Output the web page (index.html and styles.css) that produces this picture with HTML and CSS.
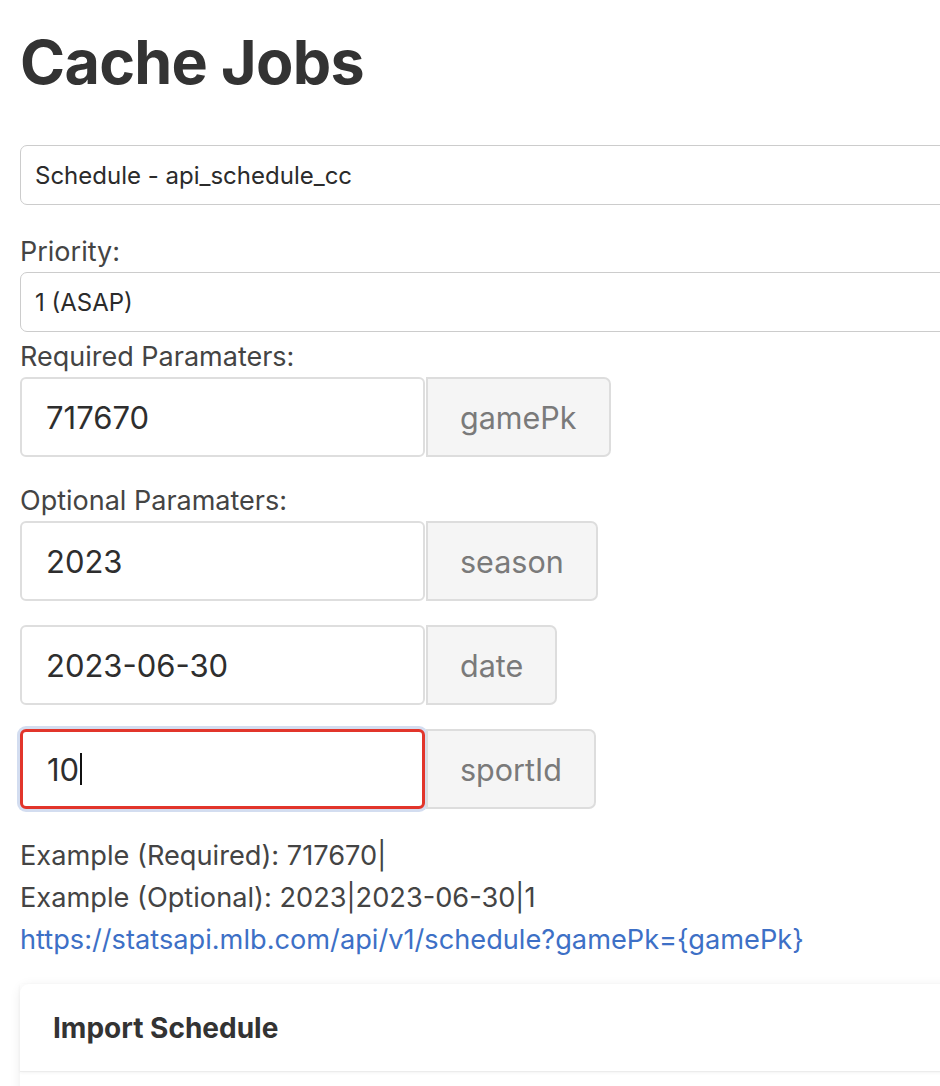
FILE: index.html
```html
<!DOCTYPE html>
<html lang="en">
<head>
<meta charset="utf-8">
<title>Cache Jobs</title>
<link rel="stylesheet" href="styles.css">
</head>
<body>
<main class="page">
  <h1 class="title">Cache Jobs</h1>

  <div class="select select-first">Schedule - api_schedule_cc</div>

  <div class="label">Priority:</div>
  <div class="select">1 (ASAP)</div>

  <div class="label label-tight">Required Paramaters:</div>
  <div class="input-group">
    <div class="control">717670</div>
    <div class="addon">gamePk</div>
  </div>

  <div class="label">Optional Paramaters:</div>
  <div class="input-group">
    <div class="control">2023</div>
    <div class="addon">season</div>
  </div>
  <div class="input-group">
    <div class="control">2023-06-30</div>
    <div class="addon">date</div>
  </div>
  <div class="input-group">
    <div class="control control-invalid">10<span class="caret"></span></div>
    <div class="addon">sportId</div>
  </div>

  <div class="examples">
    <div class="example">Example (Required): 717670|</div>
    <div class="example">Example (Optional): 2023|2023-06-30|1</div>
    <a class="example link" href="#">https://statsapi.mlb.com/api/v1/schedule?gamePk={gamePk}</a>
  </div>

  <section class="card">
    <div class="card-header">Import Schedule</div>
    <div class="card-body"></div>
  </section>
</main>
</body>
</html>
```

FILE: styles.css
```css
html, body {
  margin: 0;
  padding: 0;
  background: #ffffff;
  overflow: hidden;
}

.page {
  width: 980px;
  padding-left: 20px;
  font-family: Inter, "Liberation Sans", sans-serif;
  color: #3a3a3a;
}

.title {
  margin: 0;
  padding-top: 22px;
  font-size: 61px;
  line-height: 80px;
  font-weight: 700;
  letter-spacing: -0.7px;
  color: #333333;
}

.select {
  box-sizing: border-box;
  height: 60px;
  border: 1.5px solid #cccccc;
  border-radius: 7px;
  padding-left: 14px;
  display: flex;
  align-items: center;
  font-size: 24px;
  color: #2b2b2b;
}

.select-first {
  margin-top: 43px;
}

.label {
  margin-top: 27px;
  height: 40px;
  line-height: 40px;
  font-size: 27px;
  color: #444444;
}

.label-tight {
  margin-top: 5px;
}

.select + .label-tight { margin-top: 5px; }

.input-group + .label { margin-top: 24px; }

.input-group {
  display: flex;
  height: 80px;
  margin-bottom: 24px;
}

.control {
  box-sizing: border-box;
  width: 405px;
  height: 100%;
  border: 2.5px solid #dedede;
  border-radius: 6px;
  padding-left: 24px;
  display: flex;
  align-items: center;
  font-size: 31px;
  color: #2e2e2e;
  background: #ffffff;
}

.control-invalid {
  border: 3px solid #e2352b;
  box-shadow: 0 0 0 3px #d3ddf0;
}

.caret {
  display: inline-block;
  width: 2px;
  height: 32px;
  margin-left: 1px;
  background: #111111;
}

.addon {
  box-sizing: border-box;
  height: 100%;
  margin-left: 1px;
  padding: 0 32px;
  border: 2px solid #dddddd;
  border-radius: 0 7px 7px 0;
  background: #f5f5f5;
  display: flex;
  align-items: center;
  font-size: 30.5px;
  color: #7a7a7a;
}

.examples {
  margin-top: 26px;
  display: flex;
  flex-direction: column;
  align-items: flex-start;
}

.example {
  font-size: 27.2px;
  line-height: 42px;
  color: #444444;
}

.link {
  color: #3d70c6;
  text-decoration: none;
}

.card {
  margin-top: 23px;
  border-radius: 9px;
  background: #ffffff;
  box-shadow: 0 2px 12px rgba(0, 0, 0, 0.08);
}

.card-header {
  height: 88px;
  box-sizing: border-box;
  padding-left: 33px;
  display: flex;
  align-items: center;
  font-size: 28px;
  font-weight: 700;
  color: #333333;
  border-bottom: 1px solid #ececec;
  box-shadow: 0 1px 3px rgba(0, 0, 0, 0.05);
}

.card-body {
  height: 120px;
}
```
